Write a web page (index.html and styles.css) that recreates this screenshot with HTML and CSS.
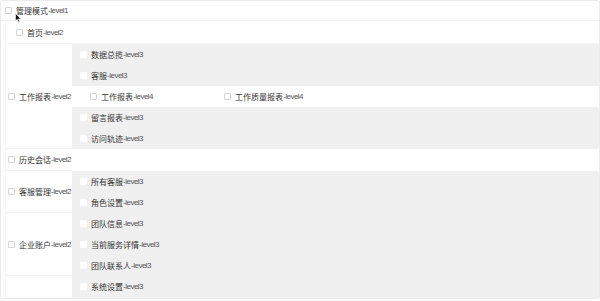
FILE: index.html
```html
<!DOCTYPE html>
<html lang="zh-CN">
<head>
  <meta charset="UTF-8" />
  <title>权限树</title>
  <link rel="stylesheet" href="styles.css">
</head>
<body>
  <div class="tree">
    <div class="root-row"><span class="cb"></span>管理模式<span class="lv">-level1</span></div>

    <div class="children">
      <div class="leaf"><span class="cb"></span>首页<span class="lv">-level2</span></div>

      <div class="group">
        <div class="group-label"><span class="cb"></span>工作报表<span class="lv">-level2</span></div>
        <div class="group-items">
          <div class="item"><span class="cb cb-plain"></span>数据总揽<span class="lv">-level3</span></div>
          <div class="item"><span class="cb cb-plain"></span>客服<span class="lv">-level3</span></div>
          <div class="sub-row">
            <div class="sub-item"><span class="cb"></span>工作报表<span class="lv">-level4</span></div>
            <div class="sub-item"><span class="cb"></span>工作质量报表<span class="lv">-level4</span></div>
          </div>
          <div class="item"><span class="cb cb-plain"></span>留言报表<span class="lv">-level3</span></div>
          <div class="item"><span class="cb cb-plain"></span>访问轨迹<span class="lv">-level3</span></div>
        </div>
      </div>

      <div class="group">
        <div class="group-label"><span class="cb"></span>历史会话<span class="lv">-level2</span></div>
      </div>

      <div class="group">
        <div class="group-label"><span class="cb"></span>客服管理<span class="lv">-level2</span></div>
        <div class="group-items">
          <div class="item"><span class="cb cb-plain"></span>所有客服<span class="lv">-level3</span></div>
          <div class="item"><span class="cb cb-plain"></span>角色设置<span class="lv">-level3</span></div>
        </div>
      </div>

      <div class="group">
        <div class="group-label"><span class="cb"></span>企业账户<span class="lv">-level2</span></div>
        <div class="group-items">
          <div class="item"><span class="cb cb-plain"></span>团队信息<span class="lv">-level3</span></div>
          <div class="item"><span class="cb cb-plain"></span>当前服务详情<span class="lv">-level3</span></div>
          <div class="item"><span class="cb cb-plain"></span>团队联系人<span class="lv">-level3</span></div>
        </div>
      </div>

      <div class="group">
        <div class="group-label"></div>
        <div class="group-items">
          <div class="item"><span class="cb cb-plain"></span>系统设置<span class="lv">-level3</span></div>
        </div>
      </div>
    </div>

    <svg class="cursor" width="7" height="10" viewBox="0 0 7 10">
      <path d="M0.5 0.5 L0.5 8 L2.3 6.3 L3.6 9.2 L4.8 8.7 L3.5 5.9 L6 5.9 Z" fill="#111" stroke="#fff" stroke-width="0.6"/>
    </svg>
  </div>
</body>
</html>
```

FILE: styles.css
```css
body {
  margin: 0;
  padding: 0;
  background-color: #ffffff;
  font-family: "Liberation Sans", "Noto Sans CJK SC", sans-serif;
  font-size: 8px;
  color: #333333;
}
.tree {
  position: relative;
  width: 598px;
  height: 297px;
  border: 1px solid #ececec;
  border-radius: 2px;
}
.cb {
  display: inline-block;
  width: 5px;
  height: 5px;
  border: 1px solid #d6d6d6;
  border-radius: 1px;
  background-color: #ffffff;
  margin-right: 4px;
  flex-shrink: 0;
}
.cb-plain {
  border-color: #ffffff;
}
.lv {
  font-size: 8px;
  letter-spacing: -0.5px;
  color: #555555;
}
.root-row {
  display: flex;
  align-items: center;
  height: 19px;
  padding-left: 4px;
  border-bottom: 1px solid #f4f4f4;
}
.children {
  margin-left: 4px;
  border-left: 1px solid #f2f2f2;
}
.leaf {
  display: flex;
  align-items: center;
  height: 22px;
  padding-left: 10px;
  border-bottom: 1px solid #f6f6f6;
}
.group {
  display: flex;
}
.group-label {
  display: flex;
  align-items: center;
  width: 64px;
  min-height: 21px;
  padding-left: 2px;
  white-space: nowrap;
  border-bottom: 1px solid #f4f4f4;
}
.group-items {
  flex: 1;
  background-color: #f0f0f0;
}
.item {
  display: flex;
  align-items: center;
  height: 21px;
  padding-left: 8px;
}
.sub-row {
  display: flex;
  align-items: center;
  height: 21px;
  padding-left: 18px;
  background-color: #ffffff;
}
.sub-item {
  display: flex;
  align-items: center;
  width: 134px;
}
.cursor {
  position: absolute;
  left: 14px;
  top: 12px;
}
```
